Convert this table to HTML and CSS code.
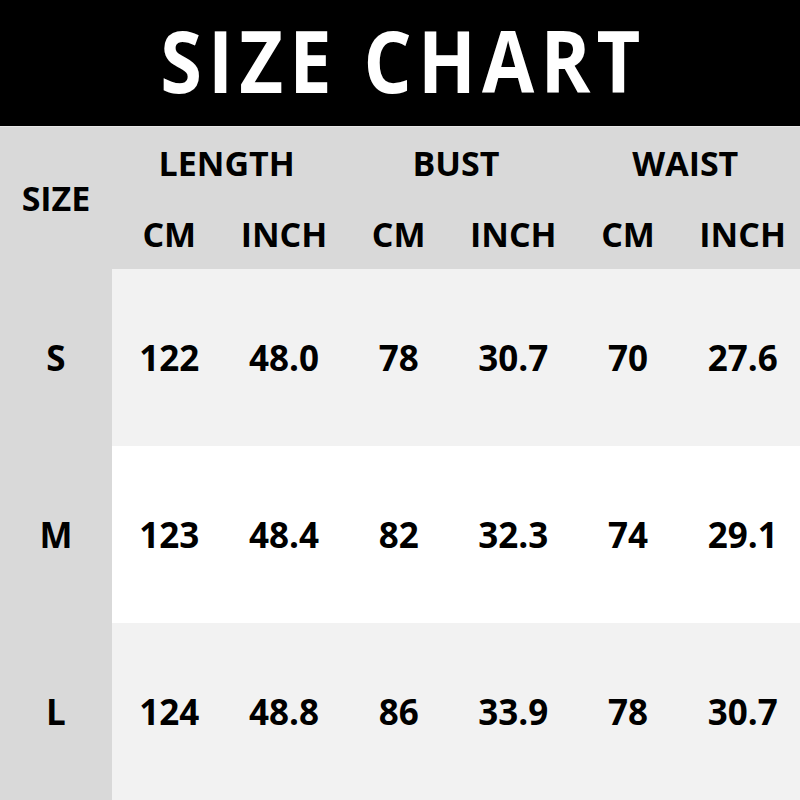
FILE: index.html
```html
<!DOCTYPE html>
<html>
<head>
<meta charset="utf-8">
<link rel="stylesheet" href="styles.css">
</head>
<body>
<div class="chart">
  <div class="title"><span class="title-text">SIZE CHART</span></div>
  <div class="grid">
    <div class="cell head size-head">SIZE</div>
    <div class="cell head group g1">LENGTH</div>
    <div class="cell head group g2">BUST</div>
    <div class="cell head group g3">WAIST</div>
    <div class="cell head">CM</div>
    <div class="cell head">INCH</div>
    <div class="cell head">CM</div>
    <div class="cell head">INCH</div>
    <div class="cell head">CM</div>
    <div class="cell head">INCH</div>

    <div class="cell side">S</div>
    <div class="cell light">122</div>
    <div class="cell light">48.0</div>
    <div class="cell light">78</div>
    <div class="cell light">30.7</div>
    <div class="cell light">70</div>
    <div class="cell light">27.6</div>

    <div class="cell side">M</div>
    <div class="cell white">123</div>
    <div class="cell white">48.4</div>
    <div class="cell white">82</div>
    <div class="cell white">32.3</div>
    <div class="cell white">74</div>
    <div class="cell white">29.1</div>

    <div class="cell side">L</div>
    <div class="cell light">124</div>
    <div class="cell light">48.8</div>
    <div class="cell light">86</div>
    <div class="cell light">33.9</div>
    <div class="cell light">78</div>
    <div class="cell light">30.7</div>
  </div>
</div>
</body>
</html>
```

FILE: styles.css
```css
html, body {
  margin: 0;
  padding: 0;
  background: #f2f2f2;
}

.chart {
  width: 800px;
  height: 800px;
  overflow: hidden;
  font-family: "Open Sans", "Noto Sans", sans-serif;
  font-weight: 700;
  color: #000;
}

.title {
  height: 127px;
  background: #000;
  border-bottom: 1px solid #e8e8e8;
  display: flex;
  align-items: center;
  justify-content: center;
  box-sizing: border-box;
}

.title-text {
  color: #fff;
  font-size: 86px;
  line-height: 1;
  display: inline-block;
  transform: scaleX(0.88);
  letter-spacing: 7px;
  margin-right: -7px;
  padding-bottom: 6px;
}

.grid {
  display: grid;
  grid-template-columns: 112px repeat(6, 1fr);
  grid-template-rows: 71px 71px 177px 177px 177px;
}

.cell {
  display: flex;
  align-items: center;
  justify-content: center;
  font-size: 35px;
  line-height: 1;
}

.head {
  background: #d9d9d9;
  font-size: 34px;
}

.size-head {
  grid-row: 1 / span 2;
}

.group {
  grid-column: span 2;
}

.side {
  background: #d9d9d9;
}

.light {
  background: #f2f2f2;
}

.white {
  background: #fff;
}
```
